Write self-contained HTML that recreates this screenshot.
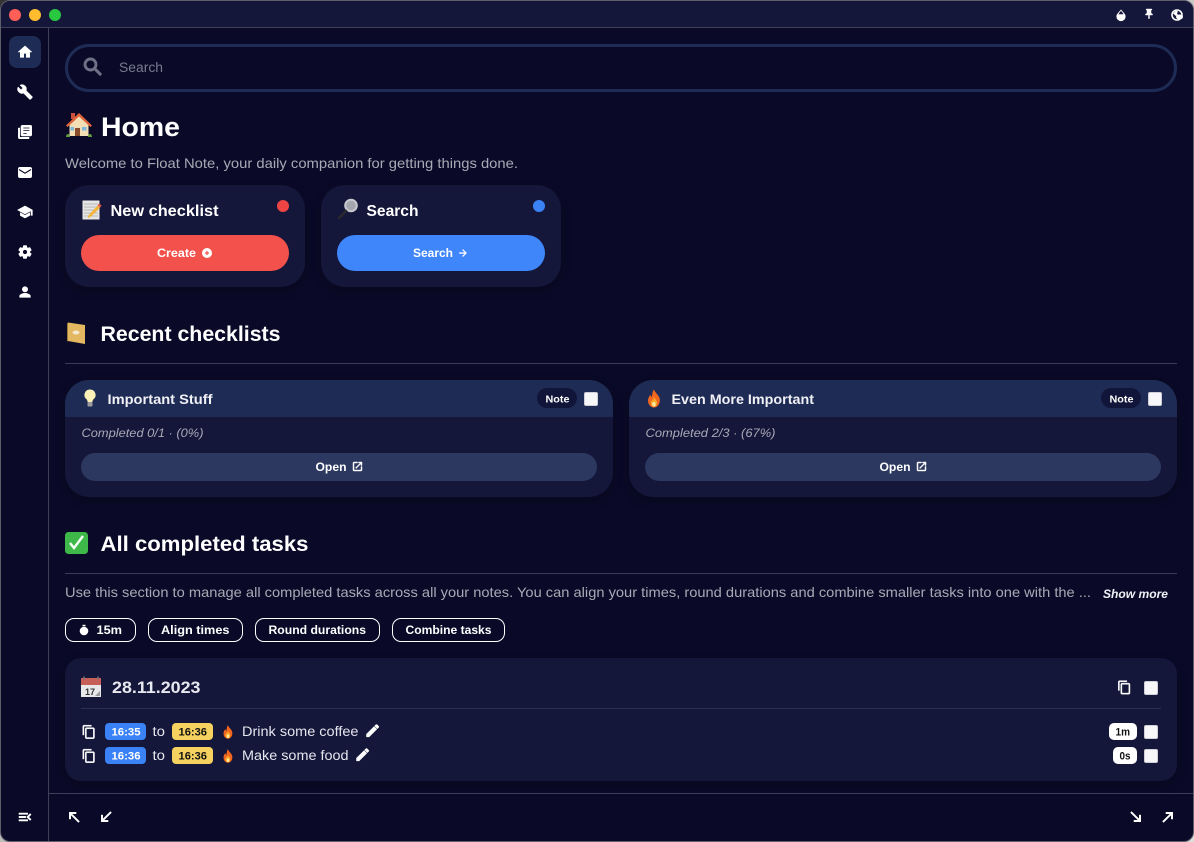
<!DOCTYPE html>
<html lang="en"><head><meta charset="utf-8"><title>Float Note</title>
<style>
*{box-sizing:border-box;margin:0;padding:0}
html,body{width:1194px;height:842px;overflow:hidden;background:linear-gradient(135deg,#333 0%,#bbb 40%,#ddd 100%)}
#win{position:absolute;left:0;top:0;width:1194px;height:842px;border-radius:10px;background:#0a0a28;border:1px solid #5f5f6c;overflow:hidden}
.b{position:absolute}
.card{background:#14163a;box-shadow:0 4px 10px rgba(0,0,0,.25)}
.cb{position:absolute;width:14px;height:14px;background:#f7f7f9;border:1px solid #d0d0d8;border-radius:2px}
svg#o{position:absolute;left:0;top:0}
text{font-family:"Liberation Sans",sans-serif}
.w{fill:#fff;font-weight:700}
.g{fill:#a9a9b6}
.t{fill:#e6e6ee}
.h{stroke:#fff;stroke-width:.9;stroke-linejoin:round}
</style></head><body>
<div id="win"></div>
<div class="b" style="left:1px;top:1px;width:1192px;height:26px;background:#14163a;border-radius:9px 9px 0 0"></div>
<div class="b" style="left:1px;top:27px;width:1192px;height:1px;background:#3f4058"></div>
<div class="b" style="left:48px;top:28px;width:1px;height:813px;background:#3f4058"></div>
<div class="b" style="left:49px;top:793px;width:1144px;height:1px;background:#3f4058"></div>
<div class="b" style="left:9px;top:36px;width:32px;height:32px;border-radius:8px;background:#1e2c55"></div>
<div class="b" style="left:65px;top:44px;width:1112px;height:48px;border:3px solid #1e2c55;border-radius:24px"></div>

<div class="b card" style="left:65px;top:185px;width:240px;height:102px;border-radius:24px"></div>
<div class="b" style="left:81px;top:235px;width:208px;height:36px;border-radius:18px;background:#f2524b"></div>
<div class="b" style="left:277px;top:200px;width:12px;height:12px;border-radius:50%;background:#ef4444"></div>
<div class="b card" style="left:321px;top:185px;width:240px;height:102px;border-radius:24px"></div>
<div class="b" style="left:337px;top:235px;width:208px;height:36px;border-radius:18px;background:#3f86fb"></div>
<div class="b" style="left:533px;top:200px;width:12px;height:12px;border-radius:50%;background:#3b82f6"></div>

<div class="b" style="left:65px;top:363px;width:1112px;height:1px;background:#3a3b54"></div>

<div class="b card" style="left:65px;top:380px;width:548px;height:117px;border-radius:24px;overflow:hidden"><div style="height:37px;background:#1e2c55"></div></div>
<div class="b" style="left:81px;top:453px;width:516px;height:28px;border-radius:14px;background:#2c3860"></div>
<div class="b" style="left:537px;top:388px;width:40px;height:20px;border-radius:10px;background:#12153a"></div>
<div class="cb" style="left:584px;top:392px"></div>

<div class="b card" style="left:629px;top:380px;width:548px;height:117px;border-radius:24px;overflow:hidden"><div style="height:37px;background:#1e2c55"></div></div>
<div class="b" style="left:645px;top:453px;width:516px;height:28px;border-radius:14px;background:#2c3860"></div>
<div class="b" style="left:1101px;top:388px;width:40px;height:20px;border-radius:10px;background:#12153a"></div>
<div class="cb" style="left:1148px;top:392px"></div>

<div class="b" style="left:65px;top:573px;width:1112px;height:1px;background:#3a3b54"></div>

<div class="b" style="left:65px;top:618px;width:71px;height:24px;border:1px solid #fff;border-radius:9px"></div>
<div class="b" style="left:148px;top:618px;width:95px;height:24px;border:1px solid #fff;border-radius:9px"></div>
<div class="b" style="left:255px;top:618px;width:125px;height:24px;border:1px solid #fff;border-radius:9px"></div>
<div class="b" style="left:392px;top:618px;width:113px;height:24px;border:1px solid #fff;border-radius:9px"></div>

<div class="b card" style="left:65px;top:658px;width:1112px;height:123px;border-radius:16px"></div>
<div class="b" style="left:81px;top:708px;width:1080px;height:1px;background:#2d2f50"></div>
<div class="cb" style="left:1144px;top:681px"></div>
<div class="cb" style="left:1144px;top:725px"></div>
<div class="cb" style="left:1144px;top:749px"></div>

<div class="b" style="left:105px;top:723px;width:41px;height:17px;border-radius:4px;background:#3b82f6"></div>
<div class="b" style="left:172px;top:723px;width:41px;height:17px;border-radius:4px;background:#f5d25f"></div>
<div class="b" style="left:105px;top:747px;width:41px;height:17px;border-radius:4px;background:#3b82f6"></div>
<div class="b" style="left:172px;top:747px;width:41px;height:17px;border-radius:4px;background:#f5d25f"></div>
<div class="b" style="left:1109px;top:723px;width:28px;height:17px;border-radius:5px;background:#fff"></div>
<div class="b" style="left:1113px;top:747px;width:24px;height:17px;border-radius:5px;background:#fff"></div>

<svg id="o" width="1194" height="842" viewBox="0 0 1194 842" xmlns="http://www.w3.org/2000/svg">
<defs>
<path id="i-copy" d="M16 1H4c-1.100 0-2 .9-2 2v14h2V3h12V1zm3 4H8c-1.100 0-2 .9-2 2v14c0 1.100.9 2 2 2h11c1.100 0 2-.9 2-2V7c0-1.100-.9-2-2-2zm0 16H8V7h11v14z"/>
<path id="i-edit" d="M3 17.250V21h3.750L17.810 9.940l-3.750-3.750L3 17.250zM20.710 7.040c.39-.39.39-1.020 0-1.410l-2.340-2.340c-.39-.39-1.020-.39-1.410 0l-1.830 1.830 3.750 3.750 1.830-1.830z"/>
<path id="i-open" d="M19 19H5V5h7V3H5c-1.110 0-2 .9-2 2v14c0 1.100.89 2 2 2h14c1.100 0 2-.9 2-2v-7h-2v7zM14 3v2h3.590l-9.830 9.830 1.410 1.410L19 6.410V10h2V3h-7z"/>
<g id="e-fire"><path fill="#f2661f" d="M12 1c1 4 6 6.500 7 11.500C19.800 18 16.500 23 12 23S4.200 18.500 5 13c.4-2.500 1.800-3.800 2.500-5.500C8.500 9 9 10 9.500 10.500 10 7 10 4 12 1z"/><path fill="#fbb02d" d="M12 10c.5 2.500 3.700 4 3.700 7.500 0 2.500-1.700 4.500-3.700 4.500s-3.700-2-3.700-4.500c0-2 1.300-2.800 1.900-4 .5.600.8 1 1 1.300.2-1.500.2-3 .8-4.800z"/><ellipse cx="12" cy="19" rx="2" ry="2.800" fill="#fdeaa0"/></g>
</defs>

<!-- traffic lights -->
<circle cx="15" cy="15" r="6" fill="#ff5f57"/><circle cx="35" cy="15" r="6" fill="#febc2e"/><circle cx="55" cy="15" r="6" fill="#28c840"/>

<!-- title bar right icons -->
<g fill="#fff">
<path d="M1121 9.500l3 3.500c1.100 1.300 1.600 2.300 1.600 3.500a4.600 4.600 0 0 1-9.200 0c0-1.200.5-2.200 1.600-3.500z"/>
<path fill="#14163a" d="M1118.400 14.300c.4-.7 1.600-2.400 2.600-3.400 1 1 2.200 2.700 2.600 3.400z"/>
<g class="h" transform="translate(1143,8) scale(.5)"><path d="M16 9V4h1c.55 0 1-.45 1-1s-.45-1-1-1H7c-.55 0-1 .45-1 1s.45 1 1 1h1v5c0 1.660-1.340 3-3 3v2h5.970v7l1 1 1-1v-7H19v-2c-1.660 0-3-1.340-3-3z"/></g>
<circle cx="1177" cy="15" r="5" fill="none" stroke="#fff" stroke-width="1.600"/>
<path d="M1173 13.500l3-3 2 1-1 2 1 1.500-2 1z"/>
<ellipse cx="1179.500" cy="17" rx="3.500" ry="2.500"/>
</g>

<!-- sidebar icons -->
<g fill="#fff">
<g class="h" transform="translate(17,44) scale(.667)"><path d="M10 20v-6h4v6h5v-8h3L12 3 2 12h3v8z"/></g>
<g class="h" transform="translate(17,84) scale(.667)"><path d="M22.700 19l-9.100-9.100c.9-2.300.4-5-1.500-6.900-2-2-5-2.400-7.400-1.300L9 6 6 9 1.600 4.700C.4 7.100.9 10.100 2.900 12.100c1.900 1.900 4.600 2.400 6.900 1.500l9.100 9.100c.4.400 1 .4 1.400 0l2.300-2.300c.5-.4.5-1.100.1-1.400z"/></g>
<g class="h" transform="translate(17,124) scale(.667)"><path d="M4 6H2v14c0 1.100.9 2 2 2h14v-2H4V6zm16-4H8c-1.100 0-2 .9-2 2v12c0 1.100.9 2 2 2h12c1.100 0 2-.9 2-2V4c0-1.100-.9-2-2-2zm-1 9H9V9h10v2zm-4 4H9v-2h6v2zm4-8H9V5h10v2z"/></g>
<rect x="18" y="167" width="14" height="11" rx="2"/><path d="M19 169.500l6 3.700 6-3.700" fill="none" stroke="#0a0a28" stroke-width="1.100"/>
<g class="h" transform="translate(17,204) scale(.667)"><path d="M5 13.180v4L12 21l7-3.820v-4L12 17l-7-3.820zM12 3L1 9l11 6 9-4.910V17h2V9L12 3z"/></g>
<g class="h" transform="translate(17,244) scale(.667)"><path d="M19.140 12.940c.04-.3.06-.61.06-.94 0-.32-.02-.64-.07-.94l2.030-1.580c.18-.14.23-.41.12-.61l-1.920-3.320c-.12-.22-.37-.29-.59-.22l-2.390.96c-.5-.38-1.030-.7-1.620-.94l-.36-2.540c-.04-.24-.24-.41-.48-.41h-3.840c-.24 0-.43.17-.47.41l-.36 2.540c-.59.24-1.130.57-1.620.94l-2.390-.96c-.22-.08-.47 0-.59.22L2.740 8.870c-.12.21-.08.47.12.61l2.030 1.580c-.05.3-.09.63-.09.94s.02.64.07.94l-2.030 1.580c-.18.14-.23.41-.12.61l1.920 3.320c.12.22.37.29.59.22l2.390-.96c.5.38 1.030.7 1.620.94l.36 2.540c.05.24.24.41.48.41h3.840c.24 0 .44-.17.47-.41l.36-2.540c.59-.24 1.130-.56 1.620-.94l2.390.96c.22.08.47 0 .59-.22l1.920-3.320c.12-.22.07-.47-.12-.61l-2.010-1.580zM12 15.600c-1.980 0-3.600-1.620-3.600-3.600s1.620-3.600 3.600-3.600 3.600 1.620 3.600 3.600-1.620 3.600-3.600 3.600z"/></g>
<g class="h" transform="translate(17,284) scale(.667)"><path d="M12 12c2.210 0 4-1.790 4-4s-1.790-4-4-4-4 1.790-4 4 1.790 4 4 4zm0 2c-2.670 0-8 1.340-8 4v2h16v-2c0-2.660-5.330-4-8-4z"/></g>
<g class="h" transform="translate(17,809) scale(.667)"><path d="M3 18h13v-2H3v2zm0-5h10v-2H3v2zm0-7v2h13V6H3zm18 9.590L17.420 12 21 8.410 19.590 7l-5 5 5 5L21 15.590z"/></g>
</g>

<!-- search -->
<g transform="translate(81,55)" fill="#6f7085" stroke="#6f7085" stroke-width=".9"><path d="M15.500 14h-.79l-.28-.27C15.410 12.590 16 11.110 16 9.500 16 5.910 13.090 3 9.500 3S3 5.910 3 9.500 5.910 16 9.500 16c1.610 0 3.090-.59 4.230-1.570l.27.28v.79l5 4.990L20.490 19l-4.990-5zm-6 0C7.010 14 5 11.990 5 9.500S7.010 5 9.500 5 14 7.010 14 9.500 11.990 14 9.500 14z"/></g>
<text x="119" y="72" font-size="13.500" fill="#78798e" textLength="44" lengthAdjust="spacingAndGlyphs">Search</text>

<!-- home heading -->
<g>
<path fill="#c9503f" d="M71 113h4v6h-4z"/>
<path fill="#f3dfb6" d="M69.500 136v-11L79 116l9.500 9v11z"/>
<path fill="#e0653a" d="M79 113l13 12.500-1.500 1.500L79 116.500 67.500 127 66 125.500z"/>
<path fill="#8a4b2a" d="M75 128h5v8h-5z"/><path fill="#7db7dc" d="M70.500 127h3.500v3.500h-3.500zM82 127h4.500v3.500H82z"/>
<path fill="#5d9a3c" d="M66 137c0-2 1-3 2-3s2 1 2 3zM88 137c0-2 1-3 2-3s2 1 2 3z"/>
</g>
<text class="w" x="101" y="136" font-size="26.500" textLength="79" lengthAdjust="spacingAndGlyphs">Home</text>
<text class="g" x="65" y="168" font-size="13.800" textLength="453" lengthAdjust="spacingAndGlyphs">Welcome to Float Note, your daily companion for getting things done.</text>

<!-- quick cards -->
<rect x="82.500" y="200.500" width="17" height="19" fill="#e6e6e6"/>
<path stroke="#a8a8a8" stroke-width=".8" d="M84 204h14M84 207h14M84 210h14M84 213h14M84 216h14"/>
<path fill="#f2b53a" d="M91 216.500l-3 2 .7-3.500 9-9.500 2.500 2z"/><path fill="#e2574c" d="M97.500 205.300l1.700-1.800 2.500 2.200-1.700 1.800z"/>
<text class="w" x="110.500" y="216" font-size="16" textLength="108" lengthAdjust="spacingAndGlyphs">New checklist</text>
<circle cx="351" cy="205.500" r="6.800" fill="#c9cad0"/><circle cx="351" cy="205.500" r="4.800" fill="#a6a7ae"/>
<path stroke="#2a2a2e" stroke-width="2.600" stroke-linecap="round" d="M346 211l-7 7"/>
<text class="w" x="366.500" y="216" font-size="16" textLength="52" lengthAdjust="spacingAndGlyphs">Search</text>
<text class="w" x="157" y="257" font-size="12" textLength="39" lengthAdjust="spacingAndGlyphs">Create</text>
<circle cx="207" cy="253" r="5" fill="#fff"/><path d="M205 253h4M207 251v4" stroke="#f2524b" stroke-width="1.200"/>
<text class="w" x="413" y="257" font-size="12" textLength="40" lengthAdjust="spacingAndGlyphs">Search</text>
<g class="h" transform="translate(457.500,247.500) scale(.46)" fill="#fff"><path d="M12 4l-1.410 1.410L16.170 11H4v2h12.170l-5.580 5.590L12 20l8-8z"/></g>

<!-- recent checklists -->
<path fill="#e3b861" d="M68 322.500l17 2.500v19l-17-3z"/><path fill="#9b7a3c" d="M68 322.500l-1 1v17.500l1 .5z"/><ellipse cx="76" cy="332.500" rx="3.500" ry="2" fill="#f3ead0"/>
<text class="w" x="100.500" y="341" font-size="21" textLength="180" lengthAdjust="spacingAndGlyphs">Recent checklists</text>

<!-- note cards -->
<path fill="#fdf1b8" d="M90 389.500a5.500 5.500 0 0 1 3.500 9.800c-.8.700-1 1.700-1 2.700h-5c0-1-.2-2-1-2.700a5.500 5.500 0 0 1 3.500-9.800z"/><rect x="87.500" y="402" width="5" height="4.500" rx="1" fill="#9a9aa0"/>
<text x="107.500" y="404" font-size="13.500" font-weight="700" fill="#f0f0f5" textLength="105" lengthAdjust="spacingAndGlyphs">Important Stuff</text>
<text class="w" x="545.500" y="402.300" font-size="10.500" textLength="24" lengthAdjust="spacingAndGlyphs">Note</text>
<text class="g" x="81.500" y="437" font-size="11.500" font-style="italic" textLength="122" lengthAdjust="spacingAndGlyphs">Completed 0/1 · (0%)</text>
<text class="w" x="315.500" y="471" font-size="12" textLength="31" lengthAdjust="spacingAndGlyphs">Open</text>
<g class="h" transform="translate(351.500,460.500) scale(.5)" fill="#fff"><use href="#i-open"/></g>

<g transform="translate(644,388.500) scale(.83)"><use href="#e-fire"/></g>
<text x="671.500" y="404" font-size="13.500" font-weight="700" fill="#f0f0f5" textLength="142.500" lengthAdjust="spacingAndGlyphs">Even More Important</text>
<text class="w" x="1109.500" y="402.300" font-size="10.500" textLength="24" lengthAdjust="spacingAndGlyphs">Note</text>
<text class="g" x="645.500" y="437" font-size="11.500" font-style="italic" textLength="130" lengthAdjust="spacingAndGlyphs">Completed 2/3 · (67%)</text>
<text class="w" x="879.500" y="471" font-size="12" textLength="31" lengthAdjust="spacingAndGlyphs">Open</text>
<g class="h" transform="translate(915.500,460.500) scale(.5)" fill="#fff"><use href="#i-open"/></g>

<!-- all completed -->
<rect x="65" y="532" width="23" height="22" rx="3.500" fill="#3fb84a"/>
<path d="M70 543l4 5L83 536" fill="none" stroke="#f4fff4" stroke-width="2.400"/>
<text class="w" x="100.500" y="551" font-size="21" textLength="208" lengthAdjust="spacingAndGlyphs">All completed tasks</text>
<text class="g" x="65" y="597" font-size="13.800" textLength="1026" lengthAdjust="spacingAndGlyphs">Use this section to manage all completed tasks across all your notes. You can align your times, round durations and combine smaller tasks into one with the ...</text>
<text x="1103" y="598" font-size="12" font-style="italic" font-weight="700" fill="#f0f0f5" textLength="65" lengthAdjust="spacingAndGlyphs">Show more</text>

<circle cx="84" cy="631" r="4.300" fill="#fff"/><path d="M82.500 624.800h3v1.500h-3z" fill="#fff"/>
<text class="w" x="96.500" y="634" font-size="12" textLength="25.500" lengthAdjust="spacingAndGlyphs">15m</text>
<text class="w" x="161" y="634" font-size="12" textLength="68.500" lengthAdjust="spacingAndGlyphs">Align times</text>
<text class="w" x="268.500" y="634" font-size="12" textLength="97.500" lengthAdjust="spacingAndGlyphs">Round durations</text>
<text class="w" x="405.500" y="634" font-size="12" textLength="86" lengthAdjust="spacingAndGlyphs">Combine tasks</text>

<!-- date -->
<rect x="81" y="678" width="20" height="19" fill="#e8e8ea"/><rect x="81" y="678" width="20" height="7" fill="#c65f58"/>
<text x="85" y="695" font-size="9" fill="#333" font-weight="700">17</text>
<path d="M84 676.500v3M98 676.500v3" stroke="#777" stroke-width="1.500"/><path d="M95 696l5-5v5z" fill="#9a9a9c"/>
<text x="112" y="693" font-size="16.500" font-weight="700" fill="#e8e8f0" textLength="88.500" lengthAdjust="spacingAndGlyphs">28.11.2023</text>
<g class="h" transform="translate(1117,680) scale(.62)" fill="#fff" style="stroke-width:.6"><use href="#i-copy"/></g>

<!-- row 1 -->
<g class="h" transform="translate(81.500,724.500) scale(.62)" fill="#fff" style="stroke-width:.6"><use href="#i-copy"/></g>
<text class="w" x="111.500" y="735.300" font-size="11" textLength="29" lengthAdjust="spacingAndGlyphs">16:35</text>
<text class="t" x="152.500" y="736" font-size="13.500" textLength="12.500" lengthAdjust="spacingAndGlyphs">to</text>
<text x="178.500" y="735.300" font-size="11" font-weight="700" fill="#111" textLength="28.500" lengthAdjust="spacingAndGlyphs">16:36</text>
<g transform="translate(220.500,724.500) scale(.62)"><use href="#e-fire"/></g>
<text class="t" x="242" y="736" font-size="13.500" textLength="116.500" lengthAdjust="spacingAndGlyphs">Drink some coffee</text>
<g class="h" transform="translate(364.500,722.500) scale(.68)" fill="#fff"><use href="#i-edit"/></g>
<text x="1115.500" y="735.300" font-size="11" font-weight="700" fill="#111" textLength="14.500" lengthAdjust="spacingAndGlyphs">1m</text>

<!-- row 2 -->
<g class="h" transform="translate(81.500,748.500) scale(.62)" fill="#fff" style="stroke-width:.6"><use href="#i-copy"/></g>
<text class="w" x="111.500" y="759.300" font-size="11" textLength="29" lengthAdjust="spacingAndGlyphs">16:36</text>
<text class="t" x="152.500" y="760" font-size="13.500" textLength="12.500" lengthAdjust="spacingAndGlyphs">to</text>
<text x="178.500" y="759.300" font-size="11" font-weight="700" fill="#111" textLength="28.500" lengthAdjust="spacingAndGlyphs">16:36</text>
<g transform="translate(220.500,748.500) scale(.62)"><use href="#e-fire"/></g>
<text class="t" x="242" y="760" font-size="13.500" textLength="106.500" lengthAdjust="spacingAndGlyphs">Make some food</text>
<g class="h" transform="translate(354.500,746.500) scale(.68)" fill="#fff"><use href="#i-edit"/></g>
<text x="1119.500" y="759.300" font-size="11" font-weight="700" fill="#111" textLength="11" lengthAdjust="spacingAndGlyphs">0s</text>

<!-- bottom arrows -->
<g fill="#fff">
<g class="h" transform="translate(66,809) scale(.667)"><path d="M5 15h2V8.410L18.590 20 20 18.590 8.410 7H15V5H5v10z"/></g>
<g class="h" transform="translate(98,809) scale(.667)"><path d="M15 19v-2H8.410L20 5.410 18.590 4 7 15.590V9H5v10h10z"/></g>
<g class="h" transform="translate(1128,809) scale(.667)"><path d="M19 9h-2v6.590L5.410 4 4 5.410 15.590 17H9v2h10V9z"/></g>
<g class="h" transform="translate(1160,809) scale(.667)"><path d="M9 5v2h6.590L4 18.590 5.410 20 17 8.410V15h2V5H9z"/></g>
</g>
</svg>
</body></html>
